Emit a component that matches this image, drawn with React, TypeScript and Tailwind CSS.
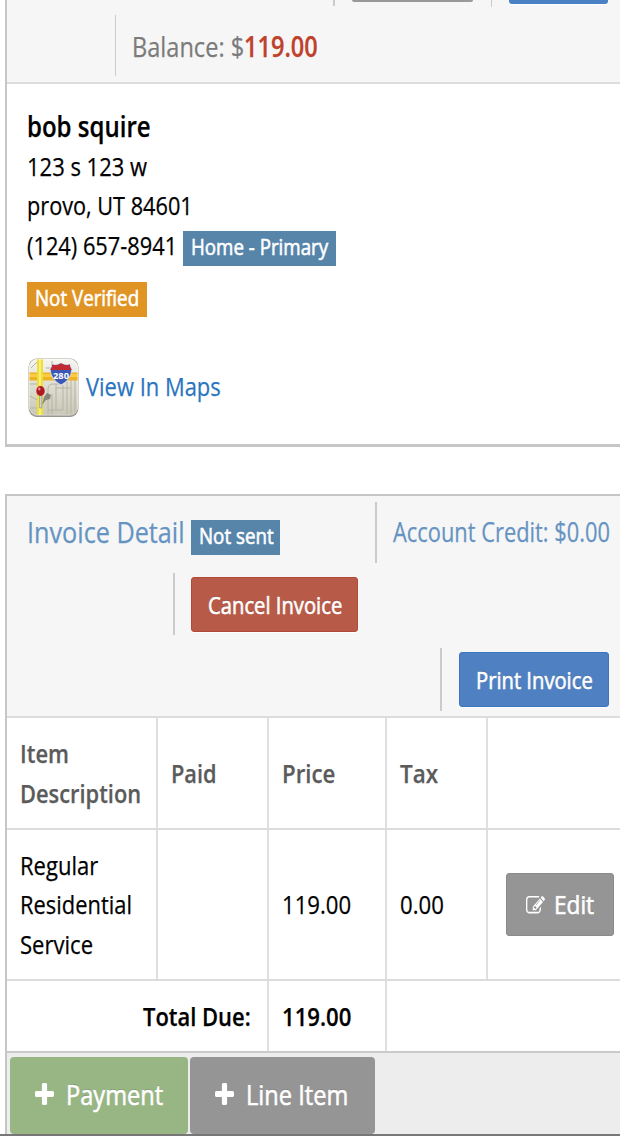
import { useLayoutEffect, useRef, useState, type ReactNode } from 'react';

// Condenses a single line of text horizontally so that it fills the given width.
function Fit({ width, className = '', children }: { width: number; className?: string; children: ReactNode }) {
  const ref = useRef<HTMLSpanElement>(null);
  const [scale, setScale] = useState(0.85);

  useLayoutEffect(() => {
    if (ref.current) setScale(width / ref.current.offsetWidth);
  }, [width]);

  return (
    <span className={`block shrink-0 ${className}`} style={{ width }}>
      <span ref={ref} className="block w-max origin-left whitespace-nowrap" style={{ transform: `scaleX(${scale})` }}>
        {children}
      </span>
    </span>
  );
}

function Divider({ className }: { className: string }) {
  return <div className={`w-[1.5px] shrink-0 bg-[#cbcbcb] ${className}`} />;
}

function Badge({ width, className, children }: { width: number; className: string; children: ReactNode }) {
  return (
    <span className={`flex h-[35px] shrink-0 pl-2 text-[22px] leading-[31px] text-white [-webkit-text-stroke:0.6px] ${className}`}>
      <Fit width={width}>{children}</Fit>
    </span>
  );
}

function EditIcon() {
  return (
    <svg viewBox="0 128 1792 1536" preserveAspectRatio="none" className="mt-[2px] h-[19px] w-[19px] fill-current">
      <path d="M888 1184l116-116-152-152-116 116v56h96v96h56zm440-720q-16-16-33 1l-350 350q-17 17-1 33t33-1l350-350q17-17 1-33zm80 594v190q0 119-84.5 203.5t-203.5 84.5h-832q-119 0-203.5-84.5t-84.5-203.5v-832q0-119 84.5-203.5t203.5-84.5h832q63 0 117 25 15 7 18 23 3 17-9 29l-49 49q-14 14-32 8-23-6-45-6h-832q-66 0-113 47t-47 113v832q0 66 47 113t113 47h832q66 0 113-47t47-113v-126q0-13 9-22l64-64q15-15 35-7t20 29zm-96-738l288 288-672 672h-288v-288zm444 132l-92 92-288-288 92-92q28-28 68-28t68 28l152 152q28 28 28 68t-28 68z" />
    </svg>
  );
}

function PlusIcon() {
  return (
    <svg viewBox="192 128 1408 1408" preserveAspectRatio="none" className="mt-[25.5px] h-[22px] w-[19px] fill-current">
      <path d="M1600 736v192q0 40-28 68t-68 28h-416v416q0 40-28 68t-68 28h-192q-40 0-68-28t-28-68v-416h-416q-40 0-68-28t-28-68v-192q0-40 28-68t68-28h416v-416q0-40 28-68t68-28h192q40 0 68 28t28 68v416h416q40 0 68 28t28 68z" />
    </svg>
  );
}

function MapsIcon() {
  return (
    <svg viewBox="0 0 51 60" className="h-[60px] w-[51px] shrink-0">
      <defs>
        <clipPath id="tile">
          <rect x="1" y="1" width="49" height="56" rx="8" ry="9" />
        </clipPath>
        <linearGradient id="paper" x1="0" y1="0" x2="0" y2="1">
          <stop offset="0" stopColor="#f7f6f0" />
          <stop offset="0.5" stopColor="#dddccf" />
          <stop offset="1" stopColor="#c9c7b6" />
        </linearGradient>
      </defs>
      <rect x="0.5" y="0.5" width="50" height="58.5" rx="8" ry="9" fill="#99978f" />
      <g clipPath="url(#tile)">
        <rect width="51" height="58" fill="url(#paper)" />
        <g fill="none" stroke="#b5b3a5" strokeWidth="1">
          <path d="M20 57V31q0-5 5-5h6M24 57V36M28 26v26h7V27M39 24v33M43 22v35M47 22v35M20 52h8M28 30h15M2 26h10M2 38l9 5M2 50h9M3 10l7-7M18 10h4M24 3v9" />
        </g>
        <path d="M-1 14.5h53v8H-1z" fill="#eeb322" />
        <path d="M-1 16h53v3H-1z" fill="#fbcb45" />
        <path d="M9 0h6v58H9z" fill="#efdf3c" />
        <path d="M11 0h2v58h-2z" fill="#f9ef72" />
      </g>
      <rect x="1.2" y="1.2" width="48.6" height="56" rx="8" ry="9" fill="none" stroke="#fff" strokeOpacity="0.5" />
      <path d="M14 47l2-8 3-4 4 2-1 4-4 1z" fill="#6d6d68" opacity="0.75" />
      <path d="M11.6 36h2.200v14h-2.200z" fill="#d5d6da" stroke="#777" strokeWidth="0.5" />
      <ellipse cx="12.5" cy="33" rx="4.2" ry="5" fill="#b01822" />
      <ellipse cx="11.3" cy="31" rx="1.2" ry="1.4" fill="#ef8f93" />
      <path d="M22 11q2-2 2-5 4 2 9-1 5 3 9 1 0 3 2 5-1 11-11 16-10-5-11-16z" fill="#3a58b4" stroke="#e4e5ef" strokeWidth="0.8" />
      <path d="M22.5 12q2-3 1.8-5.500 4 2 8.700-1.200 5 3.200 8.700 1.200 0 2.500 1.800 5.500z" fill="#c22b31" />
      <text x="33" y="20.500" textAnchor="middle" fontSize="9" fontWeight="700" fill="#fff" textLength="16" lengthAdjust="spacingAndGlyphs">280</text>
    </svg>
  );
}

function CustomerPanel() {
  return (
    <section className="ml-[5px] h-[447px] border-b-[3.5px] border-l-2 border-[#c6c6c6] bg-white">
      <header className="h-[84px] border-b-2 border-[#dcdcdc] bg-[#f6f6f6]">
        <div className="flex h-[15px] items-start">
          <Divider className="ml-[326px] h-[6px]" />
          <div className="ml-[17.5px] h-[2px] w-[121px] rounded-b-[3px] bg-[#999]" />
          <Divider className="ml-[17.5px] h-[7px]" />
          <div className="ml-[16.5px] h-1 w-[99px] rounded-b-[3px] bg-[#4a80c4] shadow-[0_1px_1px_#fff]" />
        </div>
        <div className="flex">
          <Divider className="ml-[107.5px] h-[61px]" />
          <div className="ml-[16px] flex text-[28px] leading-[62px] text-[#7b7b7b]">
            <Fit width={112}>Balance: $</Fit>
            <Fit width={74} className="font-semibold text-[#bf412c]">119.00</Fit>
          </div>
        </div>
      </header>

      <div className="pl-5 pt-[23px] text-[26px] leading-[39.5px] text-black">
        <Fit width={123.5} className="text-[28px] font-semibold">bob squire</Fit>
        <Fit width={120}>123 s 123 w</Fit>
        <Fit width={166}>provo, UT 84601</Fit>
        <div className="flex h-[39.5px]">
          <Fit width={150}>(124) 657-8941</Fit>
          <Badge width={137} className="ml-[6px] mt-[5.5px] w-[153px] bg-[#5785aa]">Home - Primary</Badge>
        </div>
        <Badge width={104} className="mt-[17px] w-[119.5px] bg-[#e09423]">Not Verified</Badge>
        <a className="ml-[0.5px] mt-[41px] flex text-[#2b75c0]">
          <MapsIcon />
          <Fit width={135} className="ml-[7px] mt-[9px]">View In Maps</Fit>
        </a>
      </div>
    </section>
  );
}

function ActionButton({ width, className, children }: { width: number; className: string; children: ReactNode }) {
  return (
    <button className={`flex h-[55px] shrink-0 rounded-[3px] border pl-4 text-[24px] leading-[54px] text-white shadow-[0_1px_1px_#fff] [-webkit-text-stroke:0.6px] [text-shadow:0_-1px_0_rgba(0,0,0,0.25)] ${className}`}>
      <Fit width={width}>{children}</Fit>
    </button>
  );
}

function InvoiceHeader() {
  return (
    <header className="h-[222px] border-b-2 border-[#dcdcdc] bg-[#f6f6f6] pt-[6px] text-[#6593c2]">
      <div className="flex h-[71px]">
        <Fit width={158} className="ml-5 text-[30px] leading-[60px]">Invoice Detail</Fit>
        <Badge width={75} className="ml-[6px] mt-[18px] w-[89px] bg-[#5785aa]">Not sent</Badge>
        <Divider className="ml-[95px] h-[61px]" />
        <Fit width={217} className="ml-[16px] text-[28px] leading-[59px]">Account Credit: $0.00</Fit>
      </div>
      <div className="flex h-[74.5px]">
        <Divider className="ml-[166px] h-[62px]" />
        <ActionButton width={134} className="ml-[16.5px] mt-[4px] w-[166.5px] border-[#b34937] bg-[#b85a48]">Cancel Invoice</ActionButton>
      </div>
      <div className="flex">
        <Divider className="ml-[433px] h-[63px]" />
        <ActionButton width={117} className="ml-[17px] mt-[4px] w-[150px] border-[#3c74bf] bg-[#4f81c2]">Print Invoice</ActionButton>
      </div>
    </header>
  );
}

const columns = 'grid grid-cols-[151px_111px_118px_101px_1fr]';
const cell = 'flex flex-col justify-center border-r-2 border-[#dfdfdf] pl-[13px] pt-px';

function InvoiceTable() {
  return (
    <div className="border-b-2 border-[#cacaca] text-[26px] leading-[39.5px] text-black">
      <div className={`${columns} h-[112px] border-b-2 border-[#dcdcdc] font-semibold text-[#5b5b5b]`}>
        <div className={cell}>
          <Fit width={49}>Item</Fit>
          <Fit width={121}>Description</Fit>
        </div>
        <div className={cell}><Fit width={46}>Paid</Fit></div>
        <div className={cell}><Fit width={53}>Price</Fit></div>
        <div className={cell}><Fit width={38}>Tax</Fit></div>
        <div />
      </div>
      <div className={`${columns} h-[151px] border-b-2 border-[#dcdcdc]`}>
        <div className={cell}>
          <Fit width={78}>Regular</Fit>
          <Fit width={112}>Residential</Fit>
          <Fit width={73}>Service</Fit>
        </div>
        <div className={cell} />
        <div className={cell}><Fit width={69}>119.00</Fit></div>
        <div className={cell}><Fit width={43.5}>0.00</Fit></div>
        <div className="flex items-center pl-[17.5px]">
          <button className="flex h-[63px] w-[108px] items-center rounded-[3px] border border-[#8a8a8a] bg-[#959595] pl-[19px] text-white [text-shadow:0_-1px_0_rgba(0,0,0,0.25)]">
            <EditIcon />
            <Fit width={40} className="ml-[9px] [-webkit-text-stroke:0.6px]">Edit</Fit>
          </button>
        </div>
      </div>
      <div className="grid h-[70px] grid-cols-[262px_118px_1fr] font-semibold">
        <div className="flex items-center justify-end border-r-2 border-[#dfdfdf] pr-[16px] pt-px">
          <Fit width={108}>Total Due:</Fit>
        </div>
        <div className={cell}><Fit width={69}>119.00</Fit></div>
      </div>
    </div>
  );
}

function FooterButton({ width, className, children }: { width: number; className: string; children: ReactNode }) {
  return (
    <button className={`flex h-[77px] rounded-[4px] pl-[25px] text-[28px] leading-[74px] text-white [text-shadow:0_-1px_0_rgba(0,0,0,0.25)] ${className}`}>
      <PlusIcon />
      <Fit width={width} className="ml-[12px] [-webkit-text-stroke:0.6px]">{children}</Fit>
    </button>
  );
}

export default function App() {
  return (
    <main className="h-[1136px] w-[620px] overflow-hidden bg-white font-['Open_Sans',sans-serif] [-webkit-text-stroke:0.25px]">
      <CustomerPanel />
      <section className="ml-[5px] mt-[47px] border-l-2 border-t-2 border-[#c6c6c6]">
        <InvoiceHeader />
        <InvoiceTable />
        <footer className="flex h-[81px] gap-[2px] bg-[#ededed] pl-[3px] pt-[4px]">
          <FooterButton width={97} className="w-[178px] bg-[#97b683]">Payment</FooterButton>
          <FooterButton width={102} className="w-[184.5px] bg-[#959595]">Line Item</FooterButton>
        </footer>
      </section>
      <div className="h-[2px] bg-[#777]" />
    </main>
  );
}
